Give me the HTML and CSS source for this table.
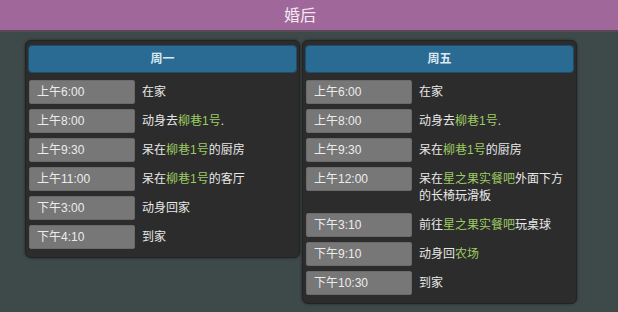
FILE: index.html
```html
<!DOCTYPE html>
<html lang="zh">
<head>
<meta charset="utf-8">
<link rel="stylesheet" href="styles.css">
</head>
<body>
<div class="titlebar">婚后</div>
<div class="main">
  <div class="card">
    <div class="head">周一</div>
    <div class="rows">
      <div class="row"><div class="time">上午6:00</div><div class="desc">在家</div></div>
      <div class="row"><div class="time">上午8:00</div><div class="desc">动身去<span class="hl">柳巷1号</span>.</div></div>
      <div class="row"><div class="time">上午9:30</div><div class="desc">呆在<span class="hl">柳巷1号</span>的厨房</div></div>
      <div class="row"><div class="time">上午11:00</div><div class="desc">呆在<span class="hl">柳巷1号</span>的客厅</div></div>
      <div class="row"><div class="time">下午3:00</div><div class="desc">动身回家</div></div>
      <div class="row"><div class="time">下午4:10</div><div class="desc">到家</div></div>
    </div>
  </div>
  <div class="card">
    <div class="head">周五</div>
    <div class="rows">
      <div class="row"><div class="time">上午6:00</div><div class="desc">在家</div></div>
      <div class="row"><div class="time">上午8:00</div><div class="desc">动身去<span class="hl">柳巷1号</span>.</div></div>
      <div class="row"><div class="time">上午9:30</div><div class="desc">呆在<span class="hl">柳巷1号</span>的厨房</div></div>
      <div class="row"><div class="time">上午12:00</div><div class="desc">呆在<span class="hl">星之果实餐吧</span>外面下方<br>的长椅玩滑板</div></div>
      <div class="row"><div class="time">下午3:10</div><div class="desc">前往<span class="hl">星之果实餐吧</span>玩桌球</div></div>
      <div class="row"><div class="time">下午9:10</div><div class="desc">动身回<span class="hl">农场</span></div></div>
      <div class="row"><div class="time">下午10:30</div><div class="desc">到家</div></div>
    </div>
  </div>
</div>
</body>
</html>
```
FILE: styles.css
```css
html, body {
  margin: 0;
  padding: 0;
}
body {
  background: #3e4949;
  width: 618px;
  height: 312px;
  overflow: hidden;
  font-family: "Liberation Sans", "Noto Sans CJK SC", sans-serif;
  font-size: 12px;
  color: #e6e6e6;
}
.titlebar {
  height: 30px;
  line-height: 31px;
  background: #a0689a;
  border-bottom: 2px solid #574a56;
  color: #f4e8f2;
  font-size: 16px;
  text-align: center;
  padding-right: 18px;
}
.main {
  display: flex;
  align-items: flex-start;
  gap: 2px;
  padding: 8px 0 0 25px;
}
.card {
  width: 269px;
  background: #2c2c2c;
  border: 1px solid #232323;
  border-radius: 6px;
  padding: 4px 2px 8px 2px;
  box-shadow: 0 0 3px rgba(0, 0, 0, 0.45);
}
.head {
  height: 26px;
  line-height: 26px;
  background: #2a6b93;
  border: 1px solid #1f4c68;
  border-radius: 4px;
  text-align: center;
  font-weight: bold;
  color: #dde8f0;
  font-size: 12px;
}
.rows {
  display: flex;
  flex-direction: column;
  gap: 5px;
  margin-top: 7px;
  padding-left: 1px;
}
.row {
  display: grid;
  grid-template-columns: 106px 1fr;
  column-gap: 7px;
  align-items: start;
}
.time {
  height: 22px;
  line-height: 22px;
  background: #777777;
  border: 1px solid #6b6b6b;
  border-radius: 2px;
  padding-left: 7px;
  color: #ececec;
}
.desc {
  padding: 4px 2px 3px 0;
  line-height: 17px;
  color: #e8e8e8;
}
.hl {
  color: #9ccb63;
}
```
